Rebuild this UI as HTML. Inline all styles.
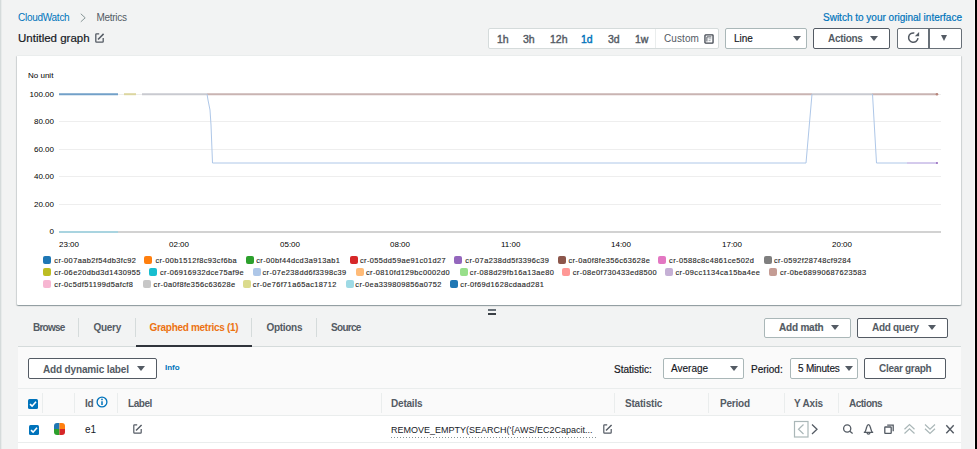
<!DOCTYPE html>
<html><head><meta charset="utf-8">
<style>
*{box-sizing:border-box;margin:0;padding:0}
html,body{width:977px;height:449px;overflow:hidden;background:#f2f3f3;font-family:"Liberation Sans",sans-serif;color:#16191f}
.a{position:absolute;white-space:nowrap}
.lnk{color:#0073bb}
.btn{position:absolute;background:#fff;border:1px solid #545b64;border-radius:2px;font-weight:bold;font-size:10px;color:#545b64;line-height:18px;letter-spacing:-0.3px}
.dd{position:absolute;background:#fff;border:1px solid #aab7b8;border-radius:2px;font-size:10px;color:#16191f;line-height:18px;-webkit-text-stroke:0.15px currentColor}
.tri{position:absolute;width:0;height:0;border-left:4px solid transparent;border-right:4px solid transparent;border-top:5px solid #545b64}
.seg{position:absolute;top:29px;font-weight:normal;-webkit-text-stroke:0.4px currentColor;font-size:10.5px;color:#545b64;line-height:20px}
.tab{position:absolute;top:321px;font-weight:bold;font-size:10px;color:#545b64;line-height:14px;letter-spacing:-0.3px}
.tsep{position:absolute;top:318px;width:1px;height:19px;background:#d5dbdb}
.tk{position:absolute;font-size:8px;color:#000;line-height:11px;text-align:right}
.xl{position:absolute;top:240px;font-size:8px;color:#000;line-height:10px}
.lg{position:absolute;font-size:7.4px;color:#2a2a2a;line-height:10px;letter-spacing:0.4px;-webkit-text-stroke:0.15px #2a2a2a}
.sq{position:absolute;width:8px;height:8px;border-radius:2px}
.th{position:absolute;top:398px;font-weight:bold;font-size:10px;color:#545b64;line-height:12px;letter-spacing:-0.2px}
.csep{position:absolute;top:393px;width:1px;height:20px;background:#eaeded}
</style></head><body>
<div class="a" style="left:0;top:0;width:1px;height:449px;background:#d5dbdb"></div>
<div class="a" style="left:1px;top:0;width:1px;height:449px;background:#e8ebeb"></div>
<div class="a" style="left:974px;top:0;width:1px;height:449px;background:#fafafa"></div>
<div class="a" style="left:975px;top:0;width:2px;height:449px;background:#000"></div>

<!-- breadcrumb -->
<div class="a lnk" style="left:18px;top:12px;font-size:10px;line-height:12px;letter-spacing:-0.27px">CloudWatch</div>
<svg class="a" style="left:80px;top:11.5px" width="8" height="12" viewBox="0 0 8 12"><path d="M0.8 1.8 L5.2 5.8 L0.8 9.8" fill="none" stroke="#879596" stroke-width="1"/></svg>
<div class="a" style="left:96.5px;top:12px;font-size:10px;line-height:12px;color:#545b64;letter-spacing:-0.3px">Metrics</div>
<div class="a lnk" style="left:823px;top:12px;font-size:10px;line-height:12px;-webkit-text-stroke:0.2px #0073bb">Switch to your original interface</div>

<!-- title -->
<div class="a" style="left:18px;top:30.5px;font-size:11.5px;line-height:15px;color:#16191f;-webkit-text-stroke:0.2px #16191f">Untitled graph</div>
<svg class="a" style="left:95px;top:33px" width="10" height="10" viewBox="0 0 10 10"><path d="M4.2 0.8 H1.5 Q0.8 0.8 0.8 1.5 V8.5 Q0.8 9.2 1.5 9.2 H7.5 Q8.2 9.2 8.2 8.5 V5" fill="none" stroke="#545b64" stroke-width="1.3"/><path d="M3 6.5 L8.6 0.9" fill="none" stroke="#545b64" stroke-width="1.5"/></svg>

<!-- time range -->
<div class="a" style="left:488px;top:28px;width:231px;height:21px;background:#fff;border:1px solid #d5dbdb;border-radius:2px"></div>
<div class="seg" style="left:497px">1h</div>
<div class="seg" style="left:523px">3h</div>
<div class="seg" style="left:550px">12h</div>
<div class="seg" style="left:581px;color:#0073bb">1d</div>
<div class="seg" style="left:608px">3d</div>
<div class="seg" style="left:635px">1w</div>
<div class="a" style="left:655px;top:29px;width:1px;height:19px;background:#eaeded"></div>
<div class="seg" style="left:664px;-webkit-text-stroke:0;font-size:10px;color:#545b64;letter-spacing:0.1px">Custom</div>
<svg class="a" style="left:703.5px;top:33.5px" width="10" height="10" viewBox="0 0 10 10"><rect x="0.95" y="0.95" width="8.1" height="8.1" rx="0.6" fill="none" stroke="#414750" stroke-width="1.3"/><path d="M2.9 2.9H7.4M2.9 2.9V7.5" stroke="#545b64" stroke-width="1"/><path d="M4.6 4.8H7.4M4.6 6.6H6.6" stroke="#9ba4ab" stroke-width="0.9"/></svg>

<div class="dd" style="left:725px;top:28px;width:82px;height:21px;padding-left:8px;line-height:19px">Line</div>
<div class="tri" style="left:793px;top:36px"></div>
<div class="btn" style="left:813px;top:28px;width:77px;height:21px;padding-left:14px;line-height:19px">Actions</div>
<div class="tri" style="left:870px;top:36px"></div>
<div class="btn" style="left:897px;top:28px;width:65px;height:21px;border-color:#687078"></div>
<div class="a" style="left:928px;top:28px;width:1.5px;height:21px;background:#687078"></div>
<svg class="a" style="left:904px;top:29px" width="20" height="18" viewBox="0 0 20 18"><path d="M13.98 9.2 A4.7 4.7 0 1 1 10.3 4.0" fill="none" stroke="#545b64" stroke-width="1.5"/><path d="M10.8 7.3 L15.1 3.0 L15.1 7.3 Z" fill="#545b64"/></svg>
<div class="tri" style="left:941px;top:35px;border-left-width:3.5px;border-right-width:3.5px;border-top-width:6px"></div>

<!-- chart panel -->
<div class="a" style="left:17px;top:55px;width:944px;height:250px;background:#fff;border-top:1px solid #eaeded;border-radius:1px;box-shadow:0 1px 1px 0 rgba(0,28,36,.24),1px 1px 1px 0 rgba(0,28,36,.13),-1px 1px 1px 0 rgba(0,28,36,.13)"></div>
<div class="a" style="left:28px;top:71px;font-size:8px;line-height:10px;color:#000">No unit</div>
<div class="tk" style="left:19px;top:89px;width:35px">100.00</div>
<div class="tk" style="left:19px;top:116px;width:35px">80.00</div>
<div class="tk" style="left:19px;top:144px;width:35px">60.00</div>
<div class="tk" style="left:19px;top:171px;width:35px">40.00</div>
<div class="tk" style="left:19px;top:199px;width:35px">20.00</div>
<div class="tk" style="left:19px;top:226px;width:35px">0</div>
<svg class="a" style="left:0;top:0" width="977" height="300" viewBox="0 0 977 300">
 <g stroke="#eeeeee" stroke-width="1">
  <path d="M59 94.5H941M59 121.5H941M59 149.5H941M59 176.5H941M59 204.5H941"/>
 </g>
 <path d="M59 232H941" stroke="#d2d2d2" stroke-width="2"/>
 <path d="M59 232H118" stroke="#a9d4e0" stroke-width="2"/>
 <path d="M59 94.2H118" stroke="#72a0c8" stroke-width="2"/>
 <path d="M124 94.2H136" stroke="#dcd6a0" stroke-width="2"/>
 <path d="M142 94.2H207" stroke="#c9cad0" stroke-width="2"/>
 <path d="M207 94.2H812M872 94.2H937" stroke="#c9b4b2" stroke-width="2"/>
 <path d="M812 94.2H872" stroke="#c9cad0" stroke-width="2"/>
 <circle cx="937" cy="94.2" r="1.3" fill="#b9867c"/>
 <path d="M207 94 L208 100 L210 110 L211 125 L212.5 163 L806 163 L812 94 M872.5 94 L876.5 163 L907 163" fill="none" stroke="#aec7e8" stroke-width="1"/>
 <path d="M907 163H937" stroke="#a08ad6" stroke-width="0.9"/>
 <circle cx="937" cy="163" r="1" fill="#9467bd"/>
</svg>
<div class="xl" style="left:59px">23:00</div>
<div class="xl" style="left:169px">02:00</div>
<div class="xl" style="left:280px">05:00</div>
<div class="xl" style="left:390px">08:00</div>
<div class="xl" style="left:501px">11:00</div>
<div class="xl" style="left:611px">14:00</div>
<div class="xl" style="left:722px">17:00</div>
<div class="xl" style="left:832px">20:00</div>

<div class="sq" style="left:43px;top:256px;background:#1f77b4"></div><div class="lg" style="left:54.3px;top:256px">cr-007aab2f54db3fc92</div>
<div class="sq" style="left:144px;top:256px;background:#ff7f0e"></div><div class="lg" style="left:155.4px;top:256px">cr-00b1512f8c93cf6ba</div>
<div class="sq" style="left:246px;top:256px;background:#2ca02c"></div><div class="lg" style="left:256.2px;top:256px">cr-00bf44dcd3a913ab1</div>
<div class="sq" style="left:350px;top:256px;background:#d62728"></div><div class="lg" style="left:360.0px;top:256px">cr-055dd59ae91c01d27</div>
<div class="sq" style="left:454px;top:256px;background:#9467bd"></div><div class="lg" style="left:465.3px;top:256px">cr-07a238dd5f3396c39</div>
<div class="sq" style="left:558px;top:256px;background:#8c564b"></div><div class="lg" style="left:568.4px;top:256px">cr-0a0f8fe356c63628e</div>
<div class="sq" style="left:658px;top:256px;background:#e377c2"></div><div class="lg" style="left:669.1px;top:256px">cr-0588c8c4861ce502d</div>
<div class="sq" style="left:764px;top:256px;background:#7f7f7f"></div><div class="lg" style="left:773.9px;top:256px">cr-0592f28748cf9284</div>
<div class="sq" style="left:43px;top:268px;background:#bcbd22"></div><div class="lg" style="left:54.3px;top:268px">cr-06e20dbd3d1430955</div>
<div class="sq" style="left:149px;top:268px;background:#17becf"></div><div class="lg" style="left:160.0px;top:268px">cr-06916932dce75af9e</div>
<div class="sq" style="left:253px;top:268px;background:#aec7e8"></div><div class="lg" style="left:262.5px;top:268px">cr-07e238dd6f3398c39</div>
<div class="sq" style="left:356px;top:268px;background:#ffbb78"></div><div class="lg" style="left:366.0px;top:268px">cr-0810fd129bc0002d0</div>
<div class="sq" style="left:460px;top:268px;background:#98df8a"></div><div class="lg" style="left:469.8px;top:268px">cr-088d29fb16a13ae80</div>
<div class="sq" style="left:562px;top:268px;background:#ff9896"></div><div class="lg" style="left:572.7px;top:268px">cr-08e0f730433ed8500</div>
<div class="sq" style="left:665px;top:268px;background:#c5b0d5"></div><div class="lg" style="left:675.5px;top:268px">cr-09cc1134ca15ba4ee</div>
<div class="sq" style="left:769px;top:268px;background:#c49c94"></div><div class="lg" style="left:780.0px;top:268px">cr-0be68990687623583</div>
<div class="sq" style="left:43px;top:280px;background:#f7b6d2"></div><div class="lg" style="left:54.3px;top:280px">cr-0c5df51199d5afcf8</div>
<div class="sq" style="left:143px;top:280px;background:#c7c7c7"></div><div class="lg" style="left:153.6px;top:280px">cr-0a0f8fe356c63628e</div>
<div class="sq" style="left:243px;top:280px;background:#dbdb8d"></div><div class="lg" style="left:252.8px;top:280px">cr-0e76f71a65ac18712</div>
<div class="sq" style="left:346px;top:280px;background:#9edae5"></div><div class="lg" style="left:355.3px;top:280px">cr-0ea339809856a0752</div>
<div class="sq" style="left:450px;top:280px;background:#1f77b4"></div><div class="lg" style="left:460.3px;top:280px">cr-0f69d1628cdaad281</div>

<!-- resize handle -->
<div class="a" style="left:488px;top:309px;width:8px;height:1.5px;background:#687078"></div>
<div class="a" style="left:488px;top:313px;width:8px;height:1.5px;background:#3a3f45"></div>

<!-- tabs -->
<div class="tab" style="left:33px;letter-spacing:-0.75px">Browse</div>
<div class="tsep" style="left:78px"></div>
<div class="tab" style="left:93.5px">Query</div>
<div class="tsep" style="left:135px"></div>
<div class="tab" style="left:149.5px;color:#ec7211">Graphed metrics (1)</div>
<div class="tsep" style="left:251px"></div>
<div class="tab" style="left:266.5px">Options</div>
<div class="tsep" style="left:316px"></div>
<div class="tab" style="left:331px;letter-spacing:-0.7px">Source</div>
<div class="dd" style="left:764px;top:318px;width:87px;height:20px;font-weight:bold;color:#545b64;padding-left:14px;letter-spacing:-0.2px">Add math</div>
<div class="tri" style="left:831px;top:325px"></div>
<div class="btn" style="left:857px;top:318px;width:91px;height:20px;padding-left:14px">Add query</div>
<div class="tri" style="left:928px;top:325px"></div>

<div class="a" style="left:18px;top:346px;width:943px;height:103px;background:#fafafa;border-top:1px solid #d5dbdb"></div>
<div class="a" style="left:136px;top:345px;width:116px;height:2px;background:#2f343b"></div>

<div class="btn" style="left:28px;top:358px;width:129px;height:21px;padding-left:14px;line-height:21px;letter-spacing:-0.15px">Add dynamic label</div>
<div class="tri" style="left:137px;top:366px"></div>
<div class="a lnk" style="left:165px;top:363px;font-size:8px;font-weight:bold;line-height:10px">Info</div>

<div class="a" style="left:614px;top:364px;font-size:10px;line-height:12px;color:#16191f;-webkit-text-stroke:0.2px #16191f">Statistic:</div>
<div class="dd" style="left:663px;top:358px;width:81px;height:21px;padding-left:7px;line-height:20px">Average</div>
<div class="tri" style="left:730px;top:366px"></div>
<div class="a" style="left:751px;top:364px;font-size:10px;line-height:12px;color:#16191f;-webkit-text-stroke:0.2px #16191f">Period:</div>
<div class="dd" style="left:790px;top:358px;width:68px;height:21px;padding-left:7px;line-height:20px;letter-spacing:-0.2px">5 Minutes</div>
<div class="tri" style="left:845px;top:366px"></div>
<div class="btn" style="left:864px;top:358px;width:82px;height:21px;padding-left:14px;line-height:20px">Clear graph</div>

<!-- table -->
<div class="a" style="left:18px;top:388px;width:943px;height:61px;background:#fff;border-top:1px solid #eaeded"></div>
<div class="a" style="left:18px;top:389px;width:943px;height:27px;background:#fafafa;border-bottom:1px solid #eaeded"></div>
<div class="a" style="left:18px;top:442px;width:943px;height:1px;background:#eaeded"></div>
<div class="csep" style="left:42px"></div>
<div class="csep" style="left:74px"></div>
<div class="csep" style="left:117px"></div>
<div class="csep" style="left:381px"></div>
<div class="csep" style="left:614px"></div>
<div class="csep" style="left:708px"></div>
<div class="csep" style="left:784px"></div>
<div class="csep" style="left:838px"></div>

<svg class="a" style="left:28px;top:399px" width="10" height="10" viewBox="0 0 10 10"><rect x="0" y="0" width="10" height="10" rx="1.5" fill="#0073bb"/><path d="M2 5.2 L4.1 7.2 L8 2.8" fill="none" stroke="#fff" stroke-width="1.6"/></svg>
<div class="th" style="left:85px">Id</div>
<svg class="a" style="left:96px;top:396px" width="12" height="12" viewBox="0 0 12 12"><circle cx="6" cy="6" r="4.9" fill="none" stroke="#0073bb" stroke-width="1.3"/><path d="M6 5.2V9" stroke="#0073bb" stroke-width="1.5"/><circle cx="6" cy="3.4" r="0.85" fill="#0073bb"/></svg>
<div class="th" style="left:128px;letter-spacing:-0.45px">Label</div>
<div class="th" style="left:391px">Details</div>
<div class="th" style="left:625px">Statistic</div>
<div class="th" style="left:720px">Period</div>
<div class="th" style="left:794px">Y Axis</div>
<div class="th" style="left:849px;letter-spacing:-0.5px">Actions</div>

<svg class="a" style="left:29px;top:425px" width="10" height="10" viewBox="0 0 10 10"><rect x="0" y="0" width="10" height="10" rx="1.5" fill="#0073bb"/><path d="M2 5.2 L4.1 7.2 L8 2.8" fill="none" stroke="#fff" stroke-width="1.6"/></svg>
<svg class="a" style="left:53.5px;top:423px" width="11" height="12" viewBox="0 0 11 12"><defs><clipPath id="cp"><rect x="0" y="0" width="11" height="12" rx="3"/></clipPath></defs><g clip-path="url(#cp)"><rect x="0" y="0" width="5.5" height="6" fill="#1f77b4"/><rect x="5.5" y="0" width="5.5" height="6" fill="#ff7f0e"/><rect x="0" y="6" width="5.5" height="6" fill="#2ca02c"/><rect x="5.5" y="6" width="5.5" height="6" fill="#d62728"/></g></svg>
<div class="a" style="left:85px;top:424px;font-size:10px;line-height:12px;color:#16191f">e1</div>
<svg class="a" style="left:133px;top:424px" width="10" height="10" viewBox="0 0 10 10"><path d="M4.2 0.8 H1.5 Q0.8 0.8 0.8 1.5 V8.5 Q0.8 9.2 1.5 9.2 H7.5 Q8.2 9.2 8.2 8.5 V5" fill="none" stroke="#545b64" stroke-width="1.2"/><path d="M3 6.5 L8.6 0.9" fill="none" stroke="#545b64" stroke-width="1.4"/></svg>
<div class="a" style="left:391px;top:423.5px;font-size:9px;line-height:12px;color:#16191f">REMOVE_EMPTY(SEARCH('{AWS/EC2Capacit...</div>
<div class="a" style="left:391px;top:437px;width:206px;height:1px;background:repeating-linear-gradient(90deg,#879596 0 1.2px,transparent 1.2px 3px)"></div>
<svg class="a" style="left:603px;top:424px" width="10" height="10" viewBox="0 0 10 10"><path d="M4.2 0.8 H1.5 Q0.8 0.8 0.8 1.5 V8.5 Q0.8 9.2 1.5 9.2 H7.5 Q8.2 9.2 8.2 8.5 V5" fill="none" stroke="#545b64" stroke-width="1.2"/><path d="M3 6.5 L8.6 0.9" fill="none" stroke="#545b64" stroke-width="1.4"/></svg>

<!-- y axis -->
<svg class="a" style="left:793px;top:420px" width="26" height="18" viewBox="0 0 26 18"><rect x="1.5" y="1.5" width="13.5" height="15.5" fill="none" stroke="#aab7b8" stroke-width="1.2"/><path d="M10.5 4.5 L5.5 9.3 L10.5 14" fill="none" stroke="#aab7b8" stroke-width="1.2"/><path d="M19 4.5 L24 9.3 L19 14" fill="none" stroke="#545b64" stroke-width="1.3"/></svg>
<!-- actions icons -->
<svg class="a" style="left:842px;top:423px" width="120" height="13" viewBox="0 0 120 13">
 <g fill="none" stroke="#545b64" stroke-width="1.3">
  <circle cx="5.2" cy="5.5" r="3.6"/><path d="M7.9 8.2 L10.6 10.6"/>
  <path d="M21.8 9.3 H31.2 M22.6 9.3 C24 8 24.2 5.5 24.7 4 C25.1 2.6 25.7 1.6 26.5 1.6 C27.3 1.6 27.9 2.6 28.3 4 C28.8 5.5 29 8 30.4 9.3 M25.1 9.8 A1.4 1.4 0 0 0 27.9 9.8"/>
  <rect x="42.8" y="4" width="6.4" height="6.4" rx="0.5"/><path d="M45.2 2.2 H51.2 V8.2"/>
 </g>
 <g fill="none" stroke="#aab7b8" stroke-width="1.2">
  <path d="M62.5 6.2 L67.5 1.5 L72.5 6.2 M62.5 10.5 L67.5 5.8 L72.5 10.5"/>
  <path d="M83 1.5 L88 6.2 L93 1.5 M83 5.8 L88 10.5 L93 5.8"/>
 </g>
 <path d="M104.3 2.3 L111.7 10.2 M111.7 2.3 L104.3 10.2" fill="none" stroke="#545b64" stroke-width="1.4"/>
</svg>
</body></html>
